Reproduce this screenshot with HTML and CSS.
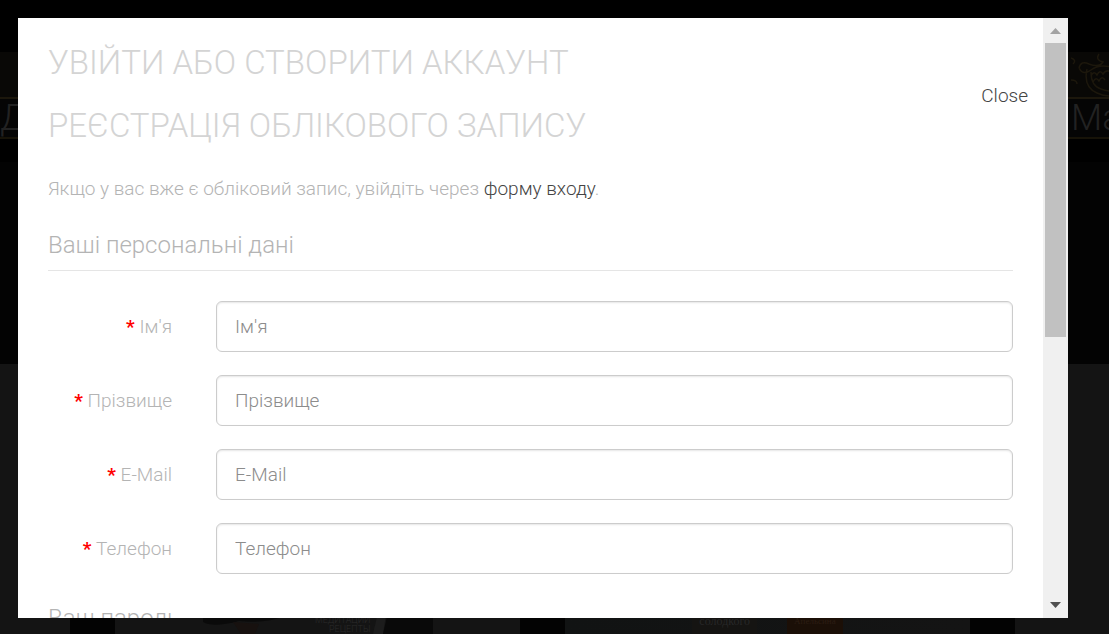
FILE: index.html
```html
<!DOCTYPE html>
<html lang="uk">
<head>
<meta charset="UTF-8" />
<meta name="viewport" content="width=device-width, initial-scale=1" />
<title>Увійти або створити аккаунт</title>
<link rel="stylesheet" href="styles.css">
</head>
<body>

<div class="page" aria-hidden="true">
  <div class="nav">
    <div class="nav-item">Д</div>
    <div class="nav-item">
      <svg class="ornament" viewBox="0 0 40 46" fill="none" stroke="#1c170c" stroke-width="1.500">
        <path d="M0 6q6 2 2 6M8 16q2-8 10-4q10 4 14-2q-8-2-4-8M8 16q4 8 12 2q8-6 20-3M16 17q-4 18 10 24q6 3 14 3M20 20q0 14 10 17q5 2 10 2M20 24q3-6 6-1q3-6 6-1q3-5 8-2M22 30q3-6 6-1q3-6 6-1M0 28q6 0 6 4"/>
      </svg>
      Ма
    </div>
  </div>
  <div class="posters">
    <div class="poster"></div>
    <div class="poster">
      <svg class="photo" viewBox="0 0 160 26"><path d="M0 3Q20-3 60 2L82 8Q62 16 36 13Q10 20 0 14z" fill="#0a0a0a"/><path d="M30 14l26 2-4 10H38z" fill="#17110f"/></svg>
      <span class="poster-title right">МЕДИТАЦИИ<br>РЕЦЕПТЫ</span>
      <svg class="photo-side" viewBox="0 0 62 26"><path d="M8 0h8l-4 26H2z" fill="#1c1c1c"/><path d="M18 0h32l12 10v16H12z" fill="#090909"/></svg>
    </div>
    <div class="poster books">
      <span class="book">солодкого</span>
      <span class="book orange">Апельсина</span>
    </div>
    <div class="poster"></div>
  </div>
</div>

<div class="modal" role="dialog" aria-labelledby="title">
  <div class="modal-body">
    <div class="modal-head">
      <h1 id="title">УВІЙТИ АБО СТВОРИТИ АККАУНТ</h1>
      <button type="button" class="close">Close</button>
    </div>
    <h1>РЕЄСТРАЦІЯ ОБЛІКОВОГО ЗАПИСУ</h1>
    <p>Якщо у вас вже є обліковий запис, увійдіть через <a href="#">форму входу</a>.</p>
    <form>
      <fieldset>
        <legend>Ваші персональні дані</legend>
        <div class="form-group">
          <label for="firstname">Ім'я</label>
          <input type="text" id="firstname" placeholder="Ім'я" required />
        </div>
        <div class="form-group">
          <label for="lastname">Прізвище</label>
          <input type="text" id="lastname" placeholder="Прізвище" required />
        </div>
        <div class="form-group">
          <label for="email">E-Mail</label>
          <input type="email" id="email" placeholder="E-Mail" required />
        </div>
        <div class="form-group">
          <label for="telephone">Телефон</label>
          <input type="tel" id="telephone" placeholder="Телефон" required />
        </div>
      </fieldset>
      <fieldset>
        <legend>Ваш пароль</legend>
      </fieldset>
    </form>
  </div>
  <div class="scrollbar" aria-hidden="true">
    <svg class="arrow" viewBox="0 0 25 25"><path d="M7 16h11l-5.500-6z" fill="#a3a3a3"/></svg>
    <div class="track"><div class="thumb"></div></div>
    <svg class="arrow" viewBox="0 0 25 25"><path d="M7 9h11l-5.500 6z" fill="#505050"/></svg>
  </div>
</div>

</body>
</html>
```
FILE: styles.css
```css
* {
  box-sizing: border-box;
}
body {
  margin: 0;
  height: 100vh;
  overflow: hidden;
  background: #000;
  color: #b4b4b4;
  font-family: Roboto, sans-serif;
  font-weight: 300;
  font-size: 19px;
  line-height: 32px;
}
.page {
  position: fixed;
  inset: 0;
  display: flex;
  flex-direction: column;
  padding-top: 52px;
  overflow: hidden;
}
.nav {
  display: flex;
  justify-content: space-between;
  height: 110px;
  background: linear-gradient(#090806 0 45px, #1c170c 45px 47px, #050505 47px 85px, #171308 85px 87px, #000 87px);
  color: #222;
  font-size: 36px;
  line-height: 132px;
}
.nav-item {
  position: relative;
  width: 38px;
  white-space: nowrap;
}
.ornament {
  position: absolute;
  top: 0;
  left: 0;
  width: 40px;
  height: 46px;
}
.posters {
  display: flex;
  flex: 1;
  justify-content: center;
  gap: 45px;
  padding-right: 24px;
  background: #030303;
  border-top: 202px solid #030303;
}
.poster {
  flex: 0 0 405px;
  display: flex;
  align-items: flex-end;
  justify-content: center;
  background: #141414;
  color: #282828;
  font-size: 9px;
  line-height: 9px;
}
.poster-title {
  width: 88px;
  color: #2a2a2a;
  text-align: right;
}
.photo {
  width: 160px;
  height: 26px;
  margin-right: -80px;
}
.photo-side {
  width: 62px;
  height: 26px;
}
.books {
  gap: 30px;
  background: linear-gradient(90deg, #111313, #141414);
}
.book {
  padding: 0 7px;
  background: #151412;
  color: #272727;
  font-family: "Liberation Serif", serif;
  font-size: 12px;
  line-height: 26px;
}
.orange {
  background: #1b0f07;
  color: #2c1d13;
  font-size: 9px;
}
.modal {
  position: fixed;
  top: 18px;
  right: 41px;
  bottom: 16px;
  left: 18px;
  display: flex;
  background: #fff;
}
.modal-body {
  flex: 1;
  padding: 13px 30px;
  overflow: hidden;
}
.modal-head {
  display: flex;
  justify-content: space-between;
}
h1 {
  margin: 0;
  color: #d4d4d4;
  font-size: 33px;
  font-weight: 300;
  line-height: 63px;
}
p {
  margin: 16px 0;
}
a {
  color: #444;
  text-decoration: none;
}
.close {
  align-self: flex-end;
  margin: 0 -15px -18px 0;
  padding: 0;
  border: 0;
  background: none;
  color: #444;
  font: inherit;
  cursor: pointer;
}
fieldset {
  margin: 0;
  padding: 0;
  border: 0;
}
legend {
  width: 100%;
  margin-bottom: 30px;
  padding: 3px 0 4px;
  border-bottom: 1px solid #e5e5e5;
  font-size: 24px;
  line-height: 42px;
}
.form-group {
  display: grid;
  grid-template-columns: 124px 1fr;
  gap: 44px;
  align-items: center;
  margin-bottom: 23px;
}
.form-group:last-child {
  margin-bottom: 20px;
}
label {
  text-align: right;
}
label::before {
  content: "* ";
  color: #f00;
  font-weight: bold;
}
input {
  width: 100%;
  height: 51px;
  padding: 8px 18px;
  border: 1px solid #ccc;
  border-radius: 6px;
  background: #fff;
  box-shadow: inset 0 1px 2px rgba(0, 0, 0, 0.1);
  color: #555;
  font: inherit;
}
input::placeholder {
  color: #8c8c8c;
}
.scrollbar {
  display: flex;
  flex-direction: column;
  width: 25px;
  background: #f0f0f0;
}
.arrow {
  height: 25px;
}
.track {
  flex: 1;
  padding: 0 2px;
}
.thumb {
  height: 53.5%;
  background: #c1c1c1;
}
```
